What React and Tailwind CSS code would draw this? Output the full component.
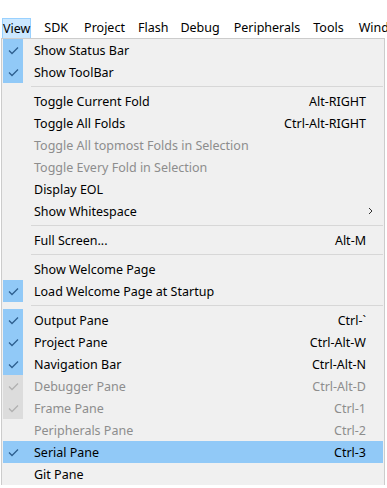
import React from "react";

const FONT = { fontFamily: '"Noto Sans", "Open Sans", sans-serif' };

function Check({ disabled }) {
  return (
    <svg width="11" height="9" viewBox="0 0 11 9" className="block">
      <polyline
        points="1,4.5 4,7.5 10,1.5"
        fill="none"
        stroke={disabled ? "#b0b0b0" : "#2e5f8f"}
        strokeWidth="1.3"
      />
    </svg>
  );
}

const items = [
  { label: "Show Status Bar", checked: true },
  { label: "Show ToolBar", checked: true },
  { sep: true },
  { label: "Toggle Current Fold", sc: "Alt-RIGHT" },
  { label: "Toggle All Folds", sc: "Ctrl-Alt-RIGHT" },
  { label: "Toggle All topmost Folds in Selection", disabled: true },
  { label: "Toggle Every Fold in Selection", disabled: true },
  { label: "Display EOL" },
  { label: "Show Whitespace", sub: true },
  { sep: true },
  { label: "Full Screen...", sc: "Alt-M" },
  { sep: true },
  { label: "Show Welcome Page" },
  { label: "Load Welcome Page at Startup", checked: true },
  { sep: true },
  { label: "Output Pane", sc: "Ctrl-`", checked: true },
  { label: "Project Pane", sc: "Ctrl-Alt-W", checked: true },
  { label: "Navigation Bar", sc: "Ctrl-Alt-N", checked: true },
  { label: "Debugger Pane", sc: "Ctrl-Alt-D", checked: true, disabled: true },
  { label: "Frame Pane", sc: "Ctrl-1", checked: true, disabled: true },
  { label: "Peripherals Pane", sc: "Ctrl-2", disabled: true },
  { label: "Serial Pane", sc: "Ctrl-3", checked: true, active: true },
  { label: "Git Pane" },
];

export default function App() {
  return (
    <div className="w-[387px] h-[488px] bg-white overflow-hidden text-[12.5px]" style={FONT}>
      <div className="h-[18px]" />
      <div className="flex items-stretch h-[20px] pl-[2px] whitespace-nowrap text-[#000] overflow-hidden">
        <div className="w-[36px] pt-[1px] bg-[#cce8ff] border border-[#99d1ff] border-b-0 flex items-center justify-center leading-none">
          View
        </div>
        <div className="flex items-center leading-none pt-[1px]">
          <span className="ml-[13px]">SDK</span>
          <span className="ml-[16px]">Project</span>
          <span className="ml-[13px]">Flash</span>
          <span className="ml-[12px]">Debug</span>
          <span className="ml-[14px]">Peripherals</span>
          <span className="ml-[13px]">Tools</span>
          <span className="ml-[15px]">Window</span>
        </div>
      </div>
      <div className="ml-[1px] w-[384px] bg-[#f0f0f0] border border-[#cccccc] border-b-0 pl-[1px] pr-[1px]">
        {items.map((it, i) => {
          if (it.sep)
            return (
              <div key={i} className="h-[7px] flex items-center pl-[28px]">
                <div className="h-px w-full bg-[#d7d7d7]" />
              </div>
            );
          const textColor = it.disabled ? "text-[#8d8d8d]" : "text-[#000]";
          return (
            <div
              key={i}
              className={`h-[22px] flex items-center ${it.active ? "bg-[#91c9f7]" : ""} ${textColor}`}
            >
              <div
                className={`w-[20px] h-full flex items-center justify-center ${
                  it.checked ? (it.disabled ? "bg-[#dcdcdc]" : "bg-[#91c9f7]") : ""
                }`}
              >
                {it.checked && <Check disabled={it.disabled} />}
              </div>
              <div className="ml-[11px] pt-[2px] flex-1 whitespace-nowrap leading-none">{it.label}</div>
              {it.sc && <div className="mr-[17px] pt-[2px] whitespace-nowrap leading-none">{it.sc}</div>}
              {it.sub && (
                <div className="mr-[10px]">
                  <svg width="5" height="8" viewBox="0 0 5 8" className="block">
                    <polyline points="1,1 4,4 1,7" fill="none" stroke="#333" strokeWidth="1" />
                  </svg>
                </div>
              )}
            </div>
          );
        })}
      </div>
    </div>
  );
}
